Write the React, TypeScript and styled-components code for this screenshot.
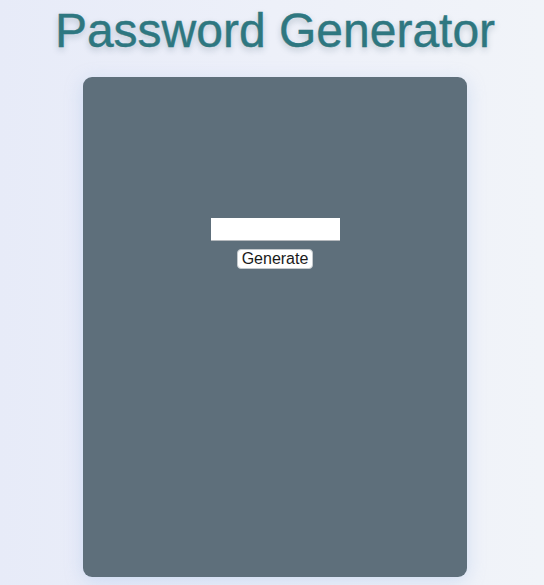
import * as React from 'react';
import styled, { createGlobalStyle } from 'styled-components';

const GlobalStyle = createGlobalStyle`
	html, body {
		margin: 0;
		padding: 0;
		min-height: 100%;
	}
	body {
		font-family: 'Liberation Sans', Arial, sans-serif;
		background: linear-gradient(90deg, #e7ebf8 0%, #edf0f9 50%, #f1f4f9 100%);
		min-height: 585px;
	}
`;

const Page = styled.div({
	display: 'flex',
	flexDirection: 'column',
	alignItems: 'center',
	paddingTop: '2px',
	paddingLeft: '6px',
});

const Title = styled.h1({
	margin: '0 0 17px',
	fontSize: '48px',
	fontWeight: 'normal',
	lineHeight: '58px',
	color: '#2e7780',
	WebkitTextStroke: '0.4px #2e7780',
	textShadow: '0 3px 6px rgba(40, 70, 90, 0.25)',
});

const Card = styled.div({
	width: '384px',
	height: '500px',
	boxSizing: 'border-box',
	paddingTop: '141px',
	display: 'flex',
	flexDirection: 'column',
	alignItems: 'center',
	gap: '8px',
	background: '#5e6f7b',
	borderRadius: '9px',
	boxShadow: '0 4px 18px rgba(150, 180, 230, 0.35)',
});

const PasswordInput = styled.input({
	width: '129px',
	height: '23px',
	boxSizing: 'border-box',
	border: 'none',
	borderBottom: '1px solid #b5b9bd',
	background: '#fff',
	padding: '1px 3px',
	fontSize: '14px',
	outline: 'none',
});

const GenerateButton = styled.button({
	height: '20px',
	padding: '0 4px',
	border: '1px solid #c4c9cd',
	borderRadius: '4px',
	background: '#fff',
	color: '#1a1a1a',
	fontFamily: "'Liberation Sans', Arial, sans-serif",
	fontSize: '16px',
	lineHeight: '18px',
	cursor: 'pointer',
});

const App: React.FC = () => {
	const [password, setPassword] = React.useState('');

	function generate() {
		const chars = 'abcdefghijklmnopqrstuvwxyzABCDEFGHIJKLMNOPQRSTUVWXYZ0123456789!@#$%';
		let out = '';
		for (let i = 0; i < 12; i++) out += chars[Math.floor(Math.random() * chars.length)];
		setPassword(out);
	}

	return (
		<Page>
			<GlobalStyle />
			<Title>Password Generator</Title>
			<Card>
				<PasswordInput
					type='text'
					value={password}
					onChange={(e) => setPassword(e.target.value)}
				/>
				<GenerateButton onClick={generate}>Generate</GenerateButton>
			</Card>
		</Page>
	);
};

export default App;
